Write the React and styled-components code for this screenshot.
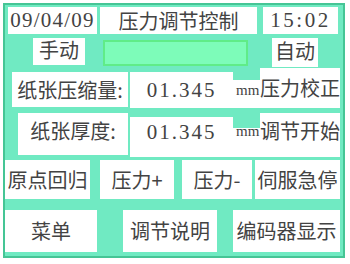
import React from "react";
import styled, { createGlobalStyle } from "styled-components";

const Global = createGlobalStyle`
  html, body { margin: 0; padding: 0; background: #ffffff; }
  body { width: 350px; height: 264px; overflow: hidden; }
`;

const Frame = styled.div`
  box-sizing: border-box;
  margin: 3px 0 0 3px;
  width: 342px;
  height: 255px;
  border: 2px solid #45c595;
  background: #70eac2;
  display: flex;
  flex-direction: column;
`;

const Row = styled.div`
  display: flex;
  align-items: flex-start;
  margin-top: ${(p) => p.$mt}px;
  height: ${(p) => p.$h}px;
`;

const Cell = styled.div`
  box-sizing: border-box;
  flex: none;
  display: flex;
  align-items: center;
  justify-content: center;
  background: #ffffff;
  margin-left: ${(p) => p.$ml || 0}px;
  margin-top: ${(p) => p.$mt || 0}px;
  padding-bottom: ${(p) => p.$pb || 0}px;
  width: ${(p) => p.$w}px;
  height: ${(p) => p.$h}px;
  color: #434343;
  white-space: nowrap;
  overflow: visible;
  font-family: ${(p) =>
    p.$num
      ? '"Liberation Serif", serif'
      : '"Noto Sans CJK SC", "Liberation Serif", sans-serif'};
  font-size: ${(p) => (p.$num ? 21 : 20)}px;
  line-height: 1;
  letter-spacing: ${(p) => (p.$num ? p.$ls ?? 1.2 : 0)}px;
`;

const Unit = styled(Cell)`
  font-family: "Liberation Serif", serif;
  font-size: 15px;
  letter-spacing: 0;
  justify-content: flex-start;
  padding-left: 3px;
`;

const Bar = styled.div`
  box-sizing: border-box;
  flex: none;
  margin-left: ${(p) => p.$ml}px;
  margin-top: ${(p) => p.$mt}px;
  width: ${(p) => p.$w}px;
  height: ${(p) => p.$h}px;
  background: #7dfcb9;
  border: 2px solid #60ec88;
`;

export default function App() {
  return (
    <>
      <Global />
      <Frame>
        <Row $mt={2} $h={27}>
          <Cell $ml={3} $w={89} $h={27} $num>09/04/09</Cell>
          <Cell $ml={3} $w={157} $h={27}>压力调节控制</Cell>
          <Cell $ml={6} $w={75} $h={27} $num $ls={2.5}>15:02</Cell>
        </Row>
        <Row $mt={4} $h={29}>
          <Cell $ml={28} $w={52} $h={27} $pb={3}>手动</Cell>
          <Bar $ml={18} $mt={2} $w={145} $h={26} />
          <Cell $ml={24} $w={46} $h={29} $pb={3}>自动</Cell>
        </Row>
        <Row $mt={1} $h={40}>
          <Cell $ml={7} $mt={4} $w={116} $h={35}>纸张压缩量:</Cell>
          <Cell $ml={2} $mt={4} $w={103} $h={36} $num $ls={2}>01.345</Cell>
          <Unit $mt={12} $w={27} $h={28} $pb={8}>mm</Unit>
          <Cell $w={80} $h={40}>压力校正</Cell>
        </Row>
        <Row $mt={5} $h={44}>
          <Cell $ml={13} $w={110} $h={42} $pb={7}>纸张厚度:</Cell>
          <Cell $ml={2} $mt={4} $w={103} $h={40} $num $ls={2} $pb={10}>01.345</Cell>
          <Unit $mt={15} $w={27} $h={29} $pb={22}>mm</Unit>
          <Cell $w={80} $h={44} $pb={8}>调节开始</Cell>
        </Row>
        <Row $mt={3} $h={39}>
          <Cell $w={85} $h={39}>原点回归</Cell>
          <Cell $ml={10} $w={74} $h={39}>压力+</Cell>
          <Cell $ml={8} $w={70} $h={39}>压力-</Cell>
          <Cell $ml={3} $w={85} $h={39}>伺服急停</Cell>
        </Row>
        <Row $mt={11} $h={42}>
          <Cell $w={92} $h={42}>菜单</Cell>
          <Cell $ml={26} $w={94} $h={42}>调节说明</Cell>
          <Cell $ml={16} $w={107} $h={42}>编码器显示</Cell>
        </Row>
      </Frame>
    </>
  );
}
